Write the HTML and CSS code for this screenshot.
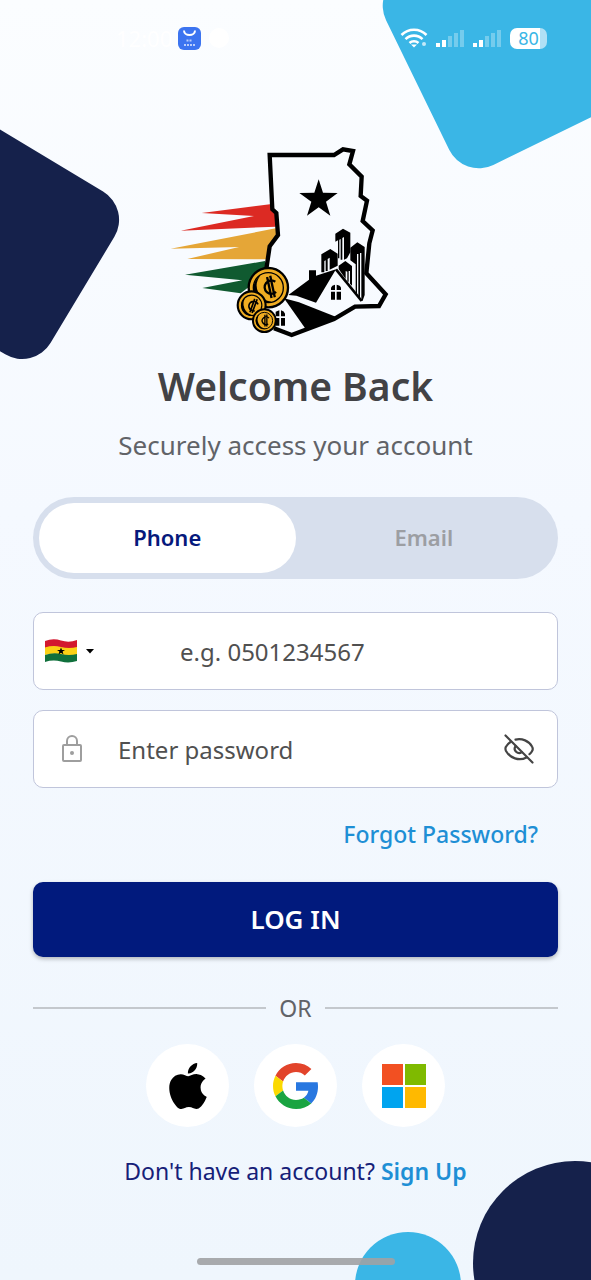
FILE: index.html
```html
<!DOCTYPE html>
<html lang="en">
  <head>
    <meta charset="utf-8">
    <meta name="viewport" content="width=device-width, initial-scale=1">
    <title>Log in</title>
    <link rel="stylesheet" href="styles.css">
  </head>
  <body>
    <div class="screen">
      <div class="shape shape-sky"></div>
      <div class="shape shape-navy"></div>
      <div class="shape circle-sky"></div>
      <div class="shape circle-navy"></div>

      <header class="status">
        <div class="status-left">
          <span class="clock">12:00</span>
          <svg width="23" height="23" viewBox="0 0 23 23">
            <rect width="23" height="23" rx="6" fill="#3c74f0"/>
            <path d="M6 3.500a5.500 4.500 0 0 0 11 0" fill="none" stroke="#fff" stroke-width="2"/>
            <path d="M8.500 13.500h6M6 18h11" stroke="#b9cdfb" stroke-width="2" stroke-dasharray="2 1"/>
          </svg>
          <svg width="20" height="20" viewBox="0 0 20 20"><circle cx="10" cy="10" r="10" fill="#fff"/></svg>
        </div>
        <div class="status-right">
          <svg width="28" height="20" viewBox="0 0 28 20" fill="none" stroke="#fff" stroke-width="2.600">
            <path d="M1.500 7a17.500 17.500 0 0 1 25 0M5.500 11.200a12 12 0 0 1 17 0M9.500 15a6.500 6.500 0 0 1 9 0"/>
            <path d="M11 16.500h6l-3 3z" fill="#fff" stroke="none"/>
            <circle cx="24" cy="16" r="2" fill="#fff" fill-opacity=".7" stroke="none"/>
          </svg>
          <svg width="29" height="20" viewBox="0 0 29 20" fill="#fff">
            <path d="M0 15h4v4H0zM6 12h4v7H6z"/>
            <path d="M12 8h4v11h-4zM18 5h4v14h-4zM24 2h4v17h-4z" fill-opacity=".3"/>
          </svg>
          <svg width="29" height="20" viewBox="0 0 29 20" fill="#fff">
            <path d="M0 15h4v4H0zM6 12h4v7H6z"/>
            <path d="M12 8h4v11h-4zM18 5h4v14h-4zM24 2h4v17h-4z" fill-opacity=".3"/>
          </svg>
          <span class="battery">80</span>
        </div>
      </header>

      <main class="content">
        <svg class="logo" viewBox="30 30 759 579">
          <path fill="#dc2a23" d="M333 208L128 234L285 243L65 287L350 275L352 235L340 225z"/>
          <path fill="#e5a637" d="M350 280L35 341L240 336L85 372L322 373L330 335L357 300z"/>
          <path fill="#105a30" d="M318 378L78 419L250 436L130 459L245 475L290 440L322 400z"/>
          <path fill="none" stroke="#000" stroke-width="13" d="M322 402L332 334L357 300L352 234L340 223L332 60H525L552 43L582 48L571 88L608 125L605 183L624 197L611 258L641 286L631 325L622 415L680 478L660 513L588 515L525 552L398 600L345 580"/>
          <path d="M479 133L492 173L536 174L501 200L514 242L479 217L444 242L457 200L421 174L466 173z"/>

          <!-- towers -->
          <path d="M487 358L514 342L536 356V392L512 404V368L506 372V408H500V376L496 378V412H487z"/>
          <path d="M529 296L552 281L574 293V352L564 370L555 374V306L550 309V374H545V312L541 314V370H537V316L529 320z"/>
          <path d="M574 338L595 322L617 336V480L611 497H607V354H603V488H598V357H594V476H590V388L574 376z"/>
          <path d="M539 392L559 378L579 393V452L573 446V408H569V440H565V410L560 408V432L539 402z"/>

          <!-- houses -->
          <path d="M388 480L450 434V406H471V422L531 403L471 503L412 482z"/>
          <path d="M531 403L608 498" stroke="#000" stroke-width="8"/>
          <path d="M375 490L420 502L532 546L440 582z"/>
          <path d="M516 465V458Q518 451 528 449V465zM533 449Q544 451 546 458V465H533zM516 470H528V494H516zM533 470H546V494H533z"/>
          <path d="M350 540V530L361 526V544H350zM366 526Q376 528 378 536V544H366zM350 549H361V572H350zM366 549H378V572H366z"/>

          <!-- coins -->
          <g stroke="#000">
            <g transform="translate(328 458)">
              <circle r="59" fill="#f0ad22" stroke-width="7"/>
              <circle r="45" fill="#f0ad22" stroke-width="4"/>
              <path d="M-24 -36A43 43 0 0 0 10 42A48 48 0 0 1 -24 -36z" stroke="none"/>
              <path transform="rotate(-12)" d="M24 -13A20 20 0 1 0 20 17M3 -32V32M13 -34V32" fill="none" stroke-width="7"/>
            </g>
            <g transform="translate(278 511) scale(.71)">
              <circle r="59" fill="#f0ad22" stroke-width="9"/>
              <circle r="43" fill="#f0ad22" stroke-width="5"/>
              <path d="M-24 -36A43 43 0 0 0 10 42A48 48 0 0 1 -24 -36z" stroke="none"/>
              <path transform="rotate(20)" d="M24 -13A20 20 0 1 0 20 17M3 -30V30M13 -32V30" fill="none" stroke-width="7"/>
            </g>
            <g transform="translate(316 557) scale(.58)">
              <circle r="59" fill="#f0ad22" stroke-width="10"/>
              <circle r="43" fill="#f0ad22" stroke-width="5"/>
              <path d="M-24 -36A43 43 0 0 0 10 42A48 48 0 0 1 -24 -36z" stroke="none"/>
              <path d="M24 -13A20 20 0 1 0 20 17M3 -30V30M13 -32V30" fill="none" stroke-width="7"/>
            </g>
          </g>
        </svg>

        <h1>Welcome Back</h1>
        <p class="subtitle">Securely access your account</p>

        <div class="tabs">
          <button type="button" class="tab active">Phone</button>
          <button type="button" class="tab">Email</button>
        </div>

        <form>
          <div class="field">
            <div class="country">
              <svg width="32" height="24" viewBox="0 0 32 24">
                <path fill="#d3182f" d="M0 2Q8 -1 16 1.500T32 1V9Q24 11 16 9T0 9z"/>
                <path fill="#fbd116" d="M0 8.500Q8 6 16 8T32 8V16Q24 17 16 15.500T0 16z"/>
                <path fill="#10703c" d="M0 16Q8 13 16 15T32 15V22Q24 24.500 16 22.500T0 23z"/>
                <path d="M16 8.500L17 11H20L17.600 12.600L18.500 15.500L16 13.800L13.500 15.500L14.400 12.600L12 11H15z"/>
              </svg>
              <svg width="8" height="5" viewBox="0 0 8 5"><path d="M0 0H8L4 4.500z"/></svg>
              <select aria-label="Country code">
                <option>GH</option>
                <option>NG</option>
              </select>
            </div>
            <input type="tel" aria-label="Phone number" placeholder="e.g. 0501234567">
          </div>

          <div class="field">
            <svg class="lock" width="22" height="28" viewBox="0 0 22 28" fill="none" stroke="#9e9e9e" stroke-width="2">
              <rect x="2" y="10" width="18" height="16" rx="1"/>
              <path d="M6 10V6a5 5 0 0 1 10 0v4"/>
              <circle cx="11" cy="18" r="2" fill="#9e9e9e" stroke="none"/>
            </svg>
            <input type="password" aria-label="Password" placeholder="Enter password">
            <button type="button" class="eye" aria-label="Show password">
              <svg width="30" height="30" viewBox="0 0 30 30" fill="none" stroke="#444" stroke-width="2.200" stroke-linecap="round">
                <path d="M1.500 1.500L28.500 28.500"/>
                <path d="M11.500 5.600C18 4 25 7 28 12.500Q29.500 15 28 17.200Q27 19 25.500 20.200"/>
                <path d="M6.500 8Q3.500 10 1.800 13Q1 15 2 17C6 24 15 27.500 22.500 23.500"/>
                <path d="M11.500 12A4.500 4.500 0 0 0 17.800 18.200"/>
              </svg>
            </button>
          </div>

          <a class="forgot" href="#">Forgot Password?</a>
          <button type="submit" class="login">LOG IN</button>
        </form>

        <div class="divider">OR</div>

        <div class="social">
          <button type="button" aria-label="Apple">
            <svg width="46" height="46" viewBox="0 0 24 24">
              <path d="M12.152 6.896c-.948 0-2.415-1.078-3.960-1.040-2.040.027-3.910 1.183-4.961 3.014-2.117 3.675-.546 9.103 1.519 12.090 1.013 1.454 2.208 3.090 3.792 3.039 1.520-.065 2.090-.987 3.935-.987 1.831 0 2.350.987 3.960.948 1.637-.026 2.676-1.480 3.676-2.948 1.156-1.688 1.636-3.325 1.662-3.415-.039-.013-3.182-1.221-3.220-4.857-.026-3.040 2.480-4.494 2.597-4.559-1.429-2.090-3.623-2.324-4.390-2.376-2-.156-3.675 1.090-4.610 1.090zM15.530 3.830c.843-1.012 1.400-2.427 1.245-3.830-1.207.052-2.662.805-3.532 1.818-.780.896-1.454 2.338-1.273 3.714 1.338.104 2.715-.688 3.559-1.701"/>
            </svg>
          </button>
          <button type="button" aria-label="Google">
            <svg width="46" height="46" viewBox="0 0 48 48">
              <path fill="#e2442b" d="M24 9.500c3.540 0 6.710 1.220 9.210 3.600l6.850-6.850C35.900 2.380 30.470 0 24 0 14.620 0 6.510 5.380 2.560 13.220l7.980 6.190C12.430 13.720 17.740 9.500 24 9.500z"/>
              <path fill="#2877e0" d="M46.980 24.550c0-1.570-.15-3.090-.38-4.550H24v9.020h12.940c-.58 2.960-2.260 5.480-4.780 7.180l7.730 6c4.510-4.180 7.090-10.360 7.090-17.650z"/>
              <path fill="#fbd900" d="M10.530 28.590c-.48-1.450-.76-2.990-.76-4.590s.27-3.140.76-4.590l-7.980-6.190C.92 16.460 0 20.120 0 24c0 3.880.92 7.540 2.560 10.780l7.970-6.190z"/>
              <path fill="#1aa441" d="M24 48c6.480 0 11.930-2.130 15.890-5.810l-7.730-6c-2.150 1.450-4.920 2.300-8.160 2.300-6.260 0-11.570-4.220-13.470-9.910l-7.980 6.190C6.510 42.620 14.620 48 24 48z"/>
            </svg>
          </button>
          <button type="button" aria-label="Microsoft">
            <svg width="46" height="46" viewBox="0 0 46 46">
              <path fill="#f25022" d="M1 1h21v21H1z"/>
              <path fill="#7fba00" d="M24 1h21v21H24z"/>
              <path fill="#00a4ef" d="M1 24h21v21H1z"/>
              <path fill="#ffb900" d="M24 24h21v21H24z"/>
            </svg>
          </button>
        </div>

        <p class="signup">Don't have an account? <a href="#">Sign Up</a></p>
      </main>

      <div class="home-bar"></div>
    </div>
  </body>
</html>
```
FILE: styles.css
```css
* {
  box-sizing: border-box;
}
body {
  margin: 0;
  font-family: "Noto Sans", "Open Sans", sans-serif;
}
button, input, select {
  font-family: inherit;
}
svg {
  display: block;
}
.screen {
  position: relative;
  display: flex;
  flex-direction: column;
  min-height: 100vh;
  overflow: hidden;
  background: linear-gradient(#fbfdff, #f5f9ff 40%, #eff6fd);
}

/* background shapes */
.shape {
  position: absolute;
}
.shape-sky {
  top: -66px;
  right: -26px;
  width: 210px;
  height: 210px;
  border-radius: 33px;
  background: #3ab6e6;
  transform: rotate(-26deg);
}
.shape-navy {
  top: 146px;
  left: -94px;
  width: 190px;
  height: 190px;
  border-radius: 33px;
  background: #15214b;
  transform: rotate(31deg);
}
.circle-sky {
  right: 130px;
  bottom: -58px;
  width: 106px;
  height: 106px;
  border-radius: 50%;
  background: #3ab6e6;
}
.circle-navy {
  right: -86px;
  bottom: -85px;
  width: 204px;
  height: 204px;
  border-radius: 50%;
  background: #15214b;
}

/* status bar */
.status {
  position: relative;
  display: flex;
  justify-content: space-between;
  align-items: center;
  height: 76px;
  padding: 0 44px 0 116px;
  color: #fff;
}
.status-left,
.status-right {
  display: flex;
  align-items: center;
  gap: 8px;
}
.clock {
  width: 54px;
  font-size: 22px;
}
.battery {
  width: 37px;
  border-radius: 7px;
  background: linear-gradient(90deg, #fff 80%, #b0e0f5 80%);
  color: #3ab6e6;
  font-size: 18px;
  line-height: 21px;
  text-align: center;
}

.content {
  position: relative;
  padding: 0 33px;
  text-align: center;
}
.logo {
  width: 253px;
  margin: 69px auto 0;
}
h1 {
  margin: 21px 0 0;
  color: #424245;
  font-size: 39px;
  font-weight: 600;
  line-height: 54px;
}
.subtitle {
  margin: 14px 0 0;
  color: #616368;
  font-size: 26px;
  line-height: 36px;
}

.tabs {
  display: flex;
  margin-top: 34px;
  padding: 6px;
  border-radius: 41px;
  background: #d7dfed;
}
.tab {
  flex: 1;
  height: 70px;
  padding: 0 0 2px;
  border: none;
  border-radius: 35px;
  background: none;
  color: #9c9ea3;
  font-size: 22px;
  font-weight: 600;
}
.tab.active {
  background: #fff;
  color: #06197c;
}

form {
  display: flex;
  flex-direction: column;
  gap: 20px;
  margin-top: 33px;
}
.field {
  display: flex;
  align-items: center;
  height: 78px;
  border: 1px solid #c0c5db;
  border-radius: 10px;
  background: #fff;
}
.field input {
  flex: 1;
  min-width: 0;
  height: 100%;
  padding: 0;
  border: none;
  outline: none;
  background: none;
  color: #444;
  font-size: 24px;
}
.field input::placeholder {
  color: #505050;
  opacity: 1;
}
.country {
  position: relative;
  display: flex;
  align-items: center;
  gap: 9px;
  width: 146px;
  height: 100%;
  padding-left: 11px;
}
.country select {
  position: absolute;
  inset: 0;
  width: 80px;
  border: none;
  appearance: none;
  background: none;
  color: transparent;
}
.lock {
  margin: 0 35px 0 27px;
}
.eye {
  margin-right: 23px;
  padding: 0;
  border: none;
  background: none;
}
.forgot {
  align-self: flex-end;
  margin: 8px 20px 10px 0;
  color: #1e8fd5;
  font-size: 23px;
  font-weight: 500;
  line-height: 36px;
  text-decoration: none;
}
.login {
  height: 75px;
  padding: 0 0 2px;
  border: none;
  border-radius: 10px;
  background: #011a7d;
  box-shadow: 0 2px 4px #0004;
  color: #fff;
  font-size: 26px;
  font-weight: 600;
}

.divider {
  display: flex;
  align-items: center;
  gap: 13px;
  margin-top: 35px;
  color: #616368;
  font-size: 23px;
  line-height: 32px;
}
.divider::before,
.divider::after {
  content: "";
  flex: 1;
  height: 2px;
  background: #c4c8cd;
}
.social {
  display: flex;
  justify-content: center;
  gap: 25px;
  margin-top: 20px;
}
.social button {
  display: flex;
  align-items: center;
  justify-content: center;
  width: 83px;
  height: 83px;
  padding: 0;
  border: none;
  border-radius: 50%;
  background: #fff;
}
.signup {
  margin: 26px 0 0;
  color: #152078;
  font-size: 23px;
  line-height: 36px;
}
.signup a {
  color: #1e8fd5;
  font-weight: 600;
  text-decoration: none;
}
.home-bar {
  position: relative;
  width: 198px;
  height: 7px;
  margin: auto auto 15px;
  border-radius: 4px;
  background: #a0a2a4e6;
}
```
